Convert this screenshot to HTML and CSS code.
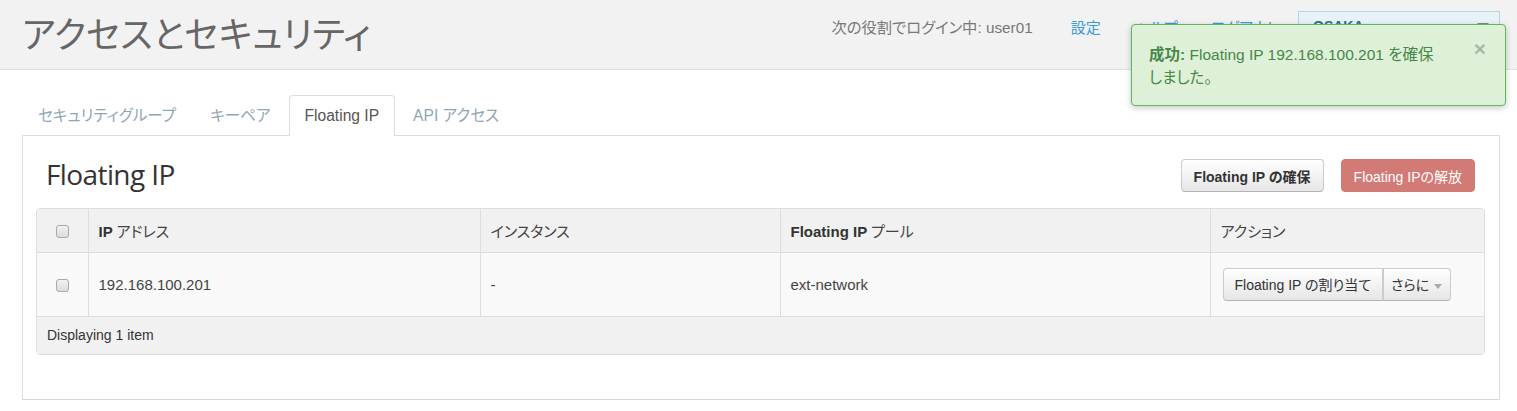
FILE: index.html
```html
<!DOCTYPE html>
<html lang="ja">
<head>
<meta charset="utf-8">
<title>アクセスとセキュリティ</title>
<link rel="stylesheet" href="styles.css">
</head>
<body>
<header class="topbar">
  <h1 class="page-title">アクセスとセキュリティ</h1>
  <nav class="user-nav">
    <span class="login-info">次の役割でログイン中: user01</span>
    <a class="nav-link nav-settings" href="#">設定</a>
    <a class="nav-link nav-help" href="#">ヘルプ</a>
    <a class="nav-link nav-logout" href="#">ログアウト</a>
    <div class="project-select"><span class="project-name">OSAKA</span><span class="select-caret"></span></div>
  </nav>
</header>

<div class="alert-success">
  <p class="alert-text"><strong>成功:</strong> Floating IP 192.168.100.201 を確保<br>しました。</p>
  <span class="alert-close">×</span>
</div>

<main class="main">
  <ul class="tabs">
    <li class="tab">セキュリティグループ</li>
    <li class="tab">キーペア</li>
    <li class="tab tab-active">Floating IP</li>
    <li class="tab">API アクセス</li>
  </ul>
  <section class="panel">
    <div class="panel-header">
      <h2 class="panel-title">Floating IP</h2>
      <div class="panel-actions">
        <button class="btn btn-default btn-bold">Floating IP の確保</button>
        <button class="btn btn-danger">Floating IPの解放</button>
      </div>
    </div>
    <div class="table-wrap">
      <table class="data-table">
        <colgroup>
          <col class="col-check">
          <col class="col-ip">
          <col class="col-inst">
          <col class="col-pool">
          <col class="col-act">
        </colgroup>
        <thead>
          <tr>
            <th class="cell-check"><span class="checkbox"></span></th>
            <th>IP <span class="ja">アドレス</span></th>
            <th><span class="ja">インスタンス</span></th>
            <th>Floating IP <span class="ja">プール</span></th>
            <th><span class="ja">アクション</span></th>
          </tr>
        </thead>
        <tbody>
          <tr>
            <td class="cell-check"><span class="checkbox"></span></td>
            <td>192.168.100.201</td>
            <td>-</td>
            <td>ext-network</td>
            <td class="cell-actions">
              <div class="btn-group">
                <button class="btn btn-default btn-split">Floating IP の割り当て</button>
                <button class="btn btn-default btn-more">さらに <span class="caret"></span></button>
              </div>
            </td>
          </tr>
        </tbody>
        <tfoot>
          <tr>
            <td colspan="5" class="footer-cell">Displaying 1 item</td>
          </tr>
        </tfoot>
      </table>
    </div>
  </section>
</main>
</body>
</html>
```

FILE: styles.css
```css
* { box-sizing: border-box; }

html, body {
  margin: 0;
  padding: 0;
  background: #fff;
}

body {
  font-family: "Liberation Sans", "Noto Sans CJK JP", sans-serif;
  font-size: 15px;
  color: #333;
  font-feature-settings: "palt";
}

/* ---------- top bar ---------- */
.topbar {
  height: 70px;
  background: #f2f2f2;
  border-bottom: 1px solid #e2e2e2;
  display: flex;
  justify-content: space-between;
  align-items: flex-start;
  padding: 0 17px 0 22px;
}

.page-title {
  margin: 10px 0 0 0;
  font-family: "Noto Sans CJK JP", sans-serif;
  font-weight: 400;
  font-size: 36px;
  line-height: 44px;
  color: #666;
}

.user-nav {
  display: flex;
  align-items: center;
  margin-top: 11px;
  height: 30px;
  white-space: nowrap;
}

.login-info {
  color: #777;
  font-size: 15.3px;
}

.nav-link {
  color: #3b9bd8;
  text-decoration: none;
  font-size: 15px;
}

.nav-settings { margin-left: 38px; }
.nav-help { margin-left: 34px; }
.nav-logout { margin-left: 33px; }

.project-select {
  margin-left: 20px;
  width: 202px;
  height: 30px;
  background: #e8f3f9;
  border: 1px solid #b9d5e4;
  display: flex;
  align-items: center;
  justify-content: space-between;
  padding: 0 10px 0 14px;
  color: #2f6f95;
  font-weight: bold;
  font-size: 14px;
}

.select-caret {
  width: 0;
  height: 0;
  border-left: 6px solid transparent;
  border-right: 6px solid transparent;
  border-top: 6px solid #888;
}

/* ---------- success toast ---------- */
.alert-success {
  position: absolute;
  left: 1131px;
  top: 24px;
  width: 375px;
  height: 82px;
  background: #dff0d8;
  border: 1px solid #5cb85c;
  border-radius: 4px;
  box-shadow: 0 2px 6px rgba(0, 0, 0, 0.22);
  padding: 18px 40px 0 17px;
  color: #468847;
}

.alert-text {
  margin: 0;
  font-size: 15.5px;
  line-height: 23px;
  white-space: nowrap;
}

.alert-text strong { font-weight: bold; }

.alert-close {
  position: absolute;
  right: 19px;
  top: 11px;
  font-size: 21px;
  font-weight: bold;
  color: #a9b8a4;
  line-height: 26px;
}

/* ---------- main ---------- */
.main {
  padding: 25px 17px 0 22px;
}

.tabs {
  list-style: none;
  margin: 0;
  padding: 0;
  display: flex;
  height: 40px;
}

.tab {
  padding: 0 15px;
  margin-right: 2px;
  height: 41px;
  line-height: 40px;
  color: #8fa7b3;
  font-size: 15.6px;
  white-space: nowrap;
  border: 1px solid transparent;
  border-bottom: none;
  border-radius: 4px 4px 0 0;
}

.tab-active {
  background: #fff;
  color: #555;
  border-color: #ddd;
  position: relative;
  z-index: 1;
}

.panel {
  border: 1px solid #ddd;
  border-bottom-color: #d6d6d6;
  box-shadow: 0 1px 1px rgba(0, 0, 0, 0.05);
  padding: 23px 14px 44px 13px;
  background: #fff;
}

.panel-header {
  display: flex;
  justify-content: space-between;
  align-items: center;
  margin-bottom: 16px;
}

.panel-title {
  margin: -3px 0 0 10px;
  font-family: "Open Sans", sans-serif;
  font-weight: 400;
  font-size: 28px;
  letter-spacing: -0.6px;
  line-height: 33px;
  color: #333;
}

.panel-actions {
  display: flex;
  gap: 17px;
  margin-right: 10px;
}

.btn {
  font-family: "Liberation Sans", "Noto Sans CJK JP", sans-serif;
  font-feature-settings: "palt";
  font-size: 14px;
  height: 33px;
  padding: 0 12px;
  border-radius: 4px;
  border: 1px solid #ccc;
  white-space: nowrap;
  cursor: pointer;
}

.btn-default {
  background: linear-gradient(#ffffff, #e6e6e6);
  color: #333;
  border-color: #ccc #ccc #b3b3b3;
}

.btn-bold {
  font-weight: bold;
}

.btn-danger {
  background: #d27a76;
  border-color: #d27a76;
  color: #fff;
}

/* ---------- table ---------- */
.table-wrap {
  border: 1px solid #ddd;
  border-radius: 4px;
  overflow: hidden;
}

.data-table {
  width: 100%;
  border-collapse: collapse;
  table-layout: fixed;
}

.col-check { width: 51px; }
.col-ip { width: 392px; }
.col-inst { width: 300px; }
.col-pool { width: 430px; }

.data-table th,
.data-table td {
  text-align: left;
  padding: 0 10px;
  border-left: 1px solid #ddd;
}

.data-table th:first-child,
.data-table td:first-child {
  border-left: none;
}

.data-table thead th {
  background: #f1f1f1;
  height: 43px;
  border-bottom: 1px solid #ddd;
  font-weight: bold;
  font-size: 15px;
  color: #333;
}

.data-table thead th .ja {
  font-weight: normal;
  color: #444;
}

.data-table tbody td {
  background: #f9f9f9;
  height: 64px;
  border-bottom: 1px solid #ddd;
  font-size: 15px;
  color: #444;
}

.data-table .cell-check {
  text-align: center;
  padding: 0;
}

.checkbox {
  display: inline-block;
  width: 13px;
  height: 13px;
  border: 1px solid #a9a9a9;
  border-radius: 3px;
  background: linear-gradient(#f2f2f2, #dcdcdc);
  vertical-align: middle;
}

.data-table .cell-actions {
  padding-left: 12px;
}

.btn-group {
  display: inline-flex;
}

.btn-split {
  border-radius: 4px 0 0 4px;
  padding: 0 11px;
}

.btn-more {
  border-left: none;
  border-radius: 0 4px 4px 0;
  box-shadow: inset 1px 0 0 #ccc;
  padding: 0 8px;
}

.caret {
  display: inline-block;
  width: 0;
  height: 0;
  margin-left: 1px;
  vertical-align: middle;
  border-left: 4px solid transparent;
  border-right: 4px solid transparent;
  border-top: 5px solid #aaa;
}

.data-table .footer-cell {
  background: #f1f1f1;
  height: 38px;
  font-size: 14px;
  color: #333;
}
```
